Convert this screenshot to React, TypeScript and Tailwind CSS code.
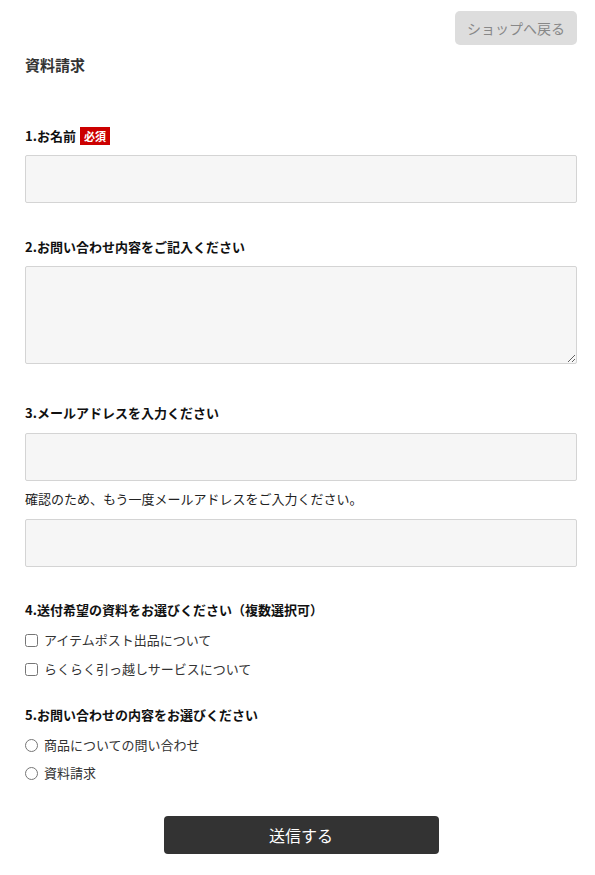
export default function App() {
  return (
    <div className="min-h-[875px] bg-white pb-5 pl-[25px] pr-[18px] pt-[11px] text-[13px] text-[#333] [font-family:'Noto_Sans_CJK_JP','Noto_Sans',sans-serif]">
      {/* Header */}
      <div className="flex justify-end">
        <button className="h-[34px] rounded-[5px] bg-[#dddddd] px-3 text-[14px] text-[#888]">
          ショップへ戻る
        </button>
      </div>
      <h1 className="mt-[10px] text-[15px] font-bold leading-5 text-[#333]">資料請求</h1>

      <form className="flex flex-col">
        {/* 1 */}
        <div className="mt-[51px] flex items-center gap-[4px] font-bold leading-5 text-[#111]">
          <span>1.お名前</span>
          <span className="bg-[#cc0000] px-[4px] text-[11px] leading-[18px] text-white">必須</span>
        </div>
        <input
          type="text"
          className="mt-[9px] h-[48px] w-full rounded-[2px] border border-[#d4d4d4] bg-[#f6f6f6] px-3 outline-none"
        />

        {/* 2 */}
        <div className="mt-[34px] font-bold leading-5 text-[#111]">2.お問い合わせ内容をご記入ください</div>
        <textarea className="mt-[9px] h-[98px] w-full rounded-[2px] border border-[#d4d4d4] bg-[#f6f6f6] px-3 py-2 outline-none" />

        {/* 3 */}
        <div className="mt-[39px] font-bold leading-5 text-[#111]">3.メールアドレスを入力ください</div>
        <input
          type="email"
          className="mt-[10px] h-[48px] w-full rounded-[2px] border border-[#d4d4d4] bg-[#f6f6f6] px-3 outline-none"
        />
        <p className="mt-[8px] leading-5 text-[#222]">確認のため、もう一度メールアドレスをご入力ください。</p>
        <input
          type="email"
          className="mt-[10px] h-[48px] w-full rounded-[2px] border border-[#d4d4d4] bg-[#f6f6f6] px-3 outline-none"
        />

        {/* 4 */}
        <div className="mt-[33px] font-bold leading-5 text-[#111]">4.送付希望の資料をお選びください（複数選択可）</div>
        <label className="mt-[10px] flex h-5 items-center gap-[6px]">
          <input type="checkbox" className="m-0 h-[13px] w-[13px]" />
          <span>アイテムポスト出品について</span>
        </label>
        <label className="mt-[9px] flex h-5 items-center gap-[6px]">
          <input type="checkbox" className="m-0 h-[13px] w-[13px]" />
          <span>らくらく引っ越しサービスについて</span>
        </label>

        {/* 5 */}
        <div className="mt-[26px] font-bold leading-5 text-[#111]">5.お問い合わせの内容をお選びください</div>
        <label className="mt-[10px] flex h-5 items-center gap-[6px]">
          <input type="radio" name="kind" className="m-0 h-[13px] w-[13px]" />
          <span>商品についての問い合わせ</span>
        </label>
        <label className="mt-[8px] flex h-5 items-center gap-[6px]">
          <input type="radio" name="kind" className="m-0 h-[13px] w-[13px]" />
          <span>資料請求</span>
        </label>

        {/* Submit */}
        <div className="mt-[33px] flex justify-center">
          <button
            type="button"
            className="h-[38px] w-[275px] rounded-[4px] bg-[#333333] text-[16px] text-white"
          >
            送信する
          </button>
        </div>
      </form>
    </div>
  );
}
